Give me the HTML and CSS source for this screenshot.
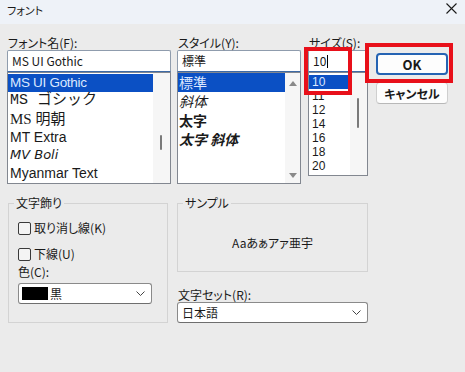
FILE: index.html
```html
<!DOCTYPE html>
<html lang="ja">
<head>
  <meta charset="UTF-8">
  <meta name="viewport" content="width=device-width, initial-scale=1.0">
  <link rel="stylesheet" href="styles.css">
  <title>フォント</title>
</head>
<body>
  <div class="window">
    <div class="titlebar">
      <span class="title">フォント</span>
      <svg class="close" width="11" height="11" viewBox="0 0 11 11">
        <path d="M0.5 0.5L10.5 10.5M10.5 0.5L0.5 10.5" stroke="#1a1a1a" stroke-width="1.1" fill="none"/>
      </svg>
    </div>

    <div class="content">
      <div class="pickers">
        <div class="col col-font">
          <div class="label">フォント名(F):</div>
          <div class="edit edit-font">MS UI Gothic</div>
          <div class="list list-font">
            <div class="items">
              <div class="item selected f-ui">MS UI Gothic</div>
              <div class="item f-gothic">MS ゴシック</div>
              <div class="item f-mincho">MS 明朝</div>
              <div class="item f-mt">MT Extra</div>
              <div class="item f-boli">MV Boli</div>
              <div class="item f-myanmar">Myanmar Text</div>
            </div>
            <div class="scroll"><span class="thumb thumb-font"></span></div>
          </div>
        </div>

        <div class="col col-style">
          <div class="label">スタイル(Y):</div>
          <div class="edit">標準</div>
          <div class="list list-style">
            <div class="items">
              <div class="item selected">標準</div>
              <div class="item s-italic">斜体</div>
              <div class="item s-bold">太字</div>
              <div class="item s-bold s-italic">太字 斜体</div>
            </div>
            <div class="scroll scroll-arrows">
              <svg width="8" height="5" viewBox="0 0 8 5"><path d="M0 5L4 0L8 5Z" fill="#8a8a8a"/></svg>
              <svg width="8" height="5" viewBox="0 0 8 5"><path d="M0 0L4 5L8 0Z" fill="#8a8a8a"/></svg>
            </div>
          </div>
        </div>

        <div class="col col-size">
          <div class="label">サイズ(S):</div>
          <div class="edit edit-size">10<span class="caret"></span></div>
          <div class="list list-size">
            <div class="items">
              <div class="item selected">10</div>
              <div class="item">11</div>
              <div class="item">12</div>
              <div class="item">14</div>
              <div class="item">16</div>
              <div class="item">18</div>
              <div class="item">20</div>
            </div>
            <div class="scroll"><span class="thumb thumb-size"></span></div>
          </div>
          <div class="mark mark-size"></div>
        </div>

        <div class="col col-buttons">
          <button class="btn btn-ok">OK</button>
          <button class="btn">キャンセル</button>
          <div class="mark mark-ok"></div>
        </div>
      </div>

      <div class="options">
        <fieldset class="group group-effects">
          <legend>文字飾り</legend>
          <label class="check check-first"><span class="box"></span>取り消し線(K)</label>
          <label class="check"><span class="box"></span>下線(U)</label>
          <div class="label label-color">色(C):</div>
          <div class="select select-color">
            <span class="swatch"></span>
            <span class="select-text">黒</span>
            <svg class="chevron" width="9" height="5" viewBox="0 0 9 5"><path d="M0.5 0.5L4.5 4.5L8.5 0.5" stroke="#444" stroke-width="1" fill="none"/></svg>
          </div>
        </fieldset>

        <div class="col-right">
          <fieldset class="group group-sample">
            <legend>サンプル</legend>
            <div class="sample">Aaあぁアァ亜宇</div>
          </fieldset>
          <div class="label label-charset">文字セット(R):</div>
          <div class="select select-charset">
            <span class="select-text">日本語</span>
            <svg class="chevron" width="9" height="5" viewBox="0 0 9 5"><path d="M0.5 0.5L4.5 4.5L8.5 0.5" stroke="#444" stroke-width="1" fill="none"/></svg>
          </div>
        </div>
      </div>
    </div>
  </div>
</body>
</html>
```

FILE: styles.css
```css
body {
  margin: 0;
  background-color: #ebebeb;
  font-family: "Noto Sans CJK JP", sans-serif;
  font-size: 12px;
  font-feature-settings: "palt";
  color: #1a1a1a;
}

.window {
  width: 465px;
  height: 372px;
  overflow: hidden;
}

.titlebar {
  height: 24px;
  box-sizing: border-box;
  padding: 3px 7px 0 7px;
  background-color: #eef2f8;
  display: flex;
  justify-content: space-between;
  align-items: flex-start;
}

.title {
  font-size: 11px;
  line-height: 14px;
}

.close {
  margin-right: 1px;
}

.content {
  padding: 12px 0 0 7px;
}

.pickers {
  display: flex;
}

.col-font {
  width: 164px;
}

.col-style {
  width: 124px;
  margin-left: 6px;
}

.col-size {
  width: 60px;
  margin-left: 7px;
  position: relative;
}

.col-buttons {
  width: 72px;
  margin-left: 8px;
  padding-top: 17px;
  position: relative;
  display: flex;
  flex-direction: column;
  gap: 7px;
}

.label {
  height: 14px;
  line-height: 14px;
  padding-left: 1px;
}

.edit {
  height: 22px;
  box-sizing: border-box;
  border: 1px solid #8f9cad;
  border-bottom-color: #3d6aa6;
  border-radius: 2px 2px 0 0;
  background-color: #fff;
  padding-left: 4px;
  line-height: 20px;
  font-size: 12px;
}

.edit-size {
  display: flex;
  align-items: center;
}

.caret {
  display: inline-block;
  width: 1px;
  height: 13px;
  background-color: #000;
  margin-left: 1px;
}

.list {
  box-sizing: border-box;
  border: 1px solid #828790;
  background-color: #fff;
  display: flex;
}

.list-font,
.list-style {
  height: 112px;
}

.list-size {
  height: 104px;
}

.items {
  flex: 1;
  padding-top: 1px;
  overflow: hidden;
}

.item {
  height: 18px;
  line-height: 18px;
  padding-left: 2px;
  white-space: nowrap;
  font-size: 14px;
}

.item.selected {
  background-color: #0b50c4;
  color: #dbe8ff;
}

.scroll {
  width: 17px;
  background-color: #f6f6f6;
  position: relative;
}

.thumb {
  position: absolute;
  left: 7px;
  width: 2px;
  background-color: #7a7a7a;
  border-radius: 1px;
}

.thumb-font {
  top: 62px;
  height: 15px;
}

.thumb-size {
  top: 25px;
  height: 30px;
}

.scroll-arrows {
  width: 15px;
  display: flex;
  flex-direction: column;
  justify-content: space-between;
  align-items: center;
  padding: 8px 0 5px 0;
}

.f-ui {
  font-family: "Liberation Sans", sans-serif;
  font-size: 13.5px;
  letter-spacing: -0.3px;
}

.f-gothic {
  font-family: "Liberation Mono", "Noto Sans CJK JP", monospace;
  font-size: 15px;
  font-feature-settings: normal;
}

.f-mincho {
  font-family: "Liberation Serif", "Noto Sans CJK JP", serif;
  font-size: 15px;
  font-feature-settings: normal;
}

.f-mt {
  font-family: "Liberation Sans", sans-serif;
  font-size: 14px;
}

.f-boli {
  font-family: "DejaVu Sans", sans-serif;
  font-style: italic;
  font-size: 13px;
}

.f-myanmar {
  font-family: "Liberation Sans", sans-serif;
  font-size: 14px;
}

.list-style .items {
  padding-top: 0;
}

.list-style .item {
  padding-left: 1px;
  height: 19px;
  line-height: 19px;
}

.s-italic {
  font-style: italic;
}

.s-bold {
  font-weight: bold;
}

.list-size .item {
  height: 14px;
  line-height: 14px;
  font-size: 12px;
  padding-left: 3px;
  font-family: "Liberation Sans", sans-serif;
}

.list-size .item.selected {
  margin-top: 1px;
}

.btn {
  height: 22px;
  box-sizing: border-box;
  border: 1px solid #cfcfcf;
  border-bottom-color: #b8b8b8;
  border-radius: 4px;
  background-color: #fdfdfd;
  font-family: "Noto Sans CJK JP", sans-serif;
  font-feature-settings: "palt";
  font-size: 12px;
  font-weight: bold;
  color: #1a1a1a;
  padding: 0;
}

.btn-ok {
  border: 2px solid #2563b3;
  font-size: 13px;
}

.mark {
  position: absolute;
  border: 4px solid #e8101a;
  box-sizing: border-box;
}

.mark-size {
  left: -4px;
  top: 11px;
  width: 48px;
  height: 48px;
}

.mark-ok {
  left: -11px;
  top: 7px;
  width: 88px;
  height: 40px;
}

.options {
  display: flex;
  margin-top: 12px;
}

.group {
  margin: 0;
  box-sizing: border-box;
  border: 1px solid #d3d3d3;
  min-width: 0;
}

.group legend {
  padding: 0 2px;
  margin-left: -4px;
  line-height: 14px;
  font-size: 12px;
}

.group-effects {
  width: 160px;
  margin-left: 1px;
  padding: 0 9px 18px 9px;
}

.check {
  display: flex;
  align-items: center;
  height: 14px;
  line-height: 14px;
  margin-top: 12px;
  gap: 3px;
}

.check-first {
  margin-top: 11px;
}

.box {
  width: 13px;
  height: 13px;
  box-sizing: border-box;
  border: 1px solid #3a3a3a;
  border-radius: 2px;
  background-color: #f4f4f4;
}

.label-color {
  margin-top: 4px;
  padding-left: 0;
}

.select {
  height: 21px;
  box-sizing: border-box;
  border: 1px solid #8a8a8a;
  border-bottom-color: #6e6e6e;
  border-radius: 3px;
  background-color: #fff;
  display: flex;
  align-items: center;
  padding: 0 6px 0 4px;
}

.select-color {
  margin-top: 4px;
  width: 134px;
  padding-left: 3px;
}

.swatch {
  width: 26px;
  height: 13px;
  background-color: #000;
  margin-right: 2px;
}

.select-text {
  flex: 1;
  line-height: 19px;
}

.col-right {
  width: 191px;
  margin-left: 9px;
}

.group-sample {
  width: 191px;
  padding: 0 9px 0 9px;
}

.sample {
  height: 58px;
  padding-top: 3px;
  display: flex;
  justify-content: center;
  align-items: center;
  font-size: 12px;
}

.label-charset {
  margin-top: 16px;
}

.select-charset {
  width: 191px;
}
```
